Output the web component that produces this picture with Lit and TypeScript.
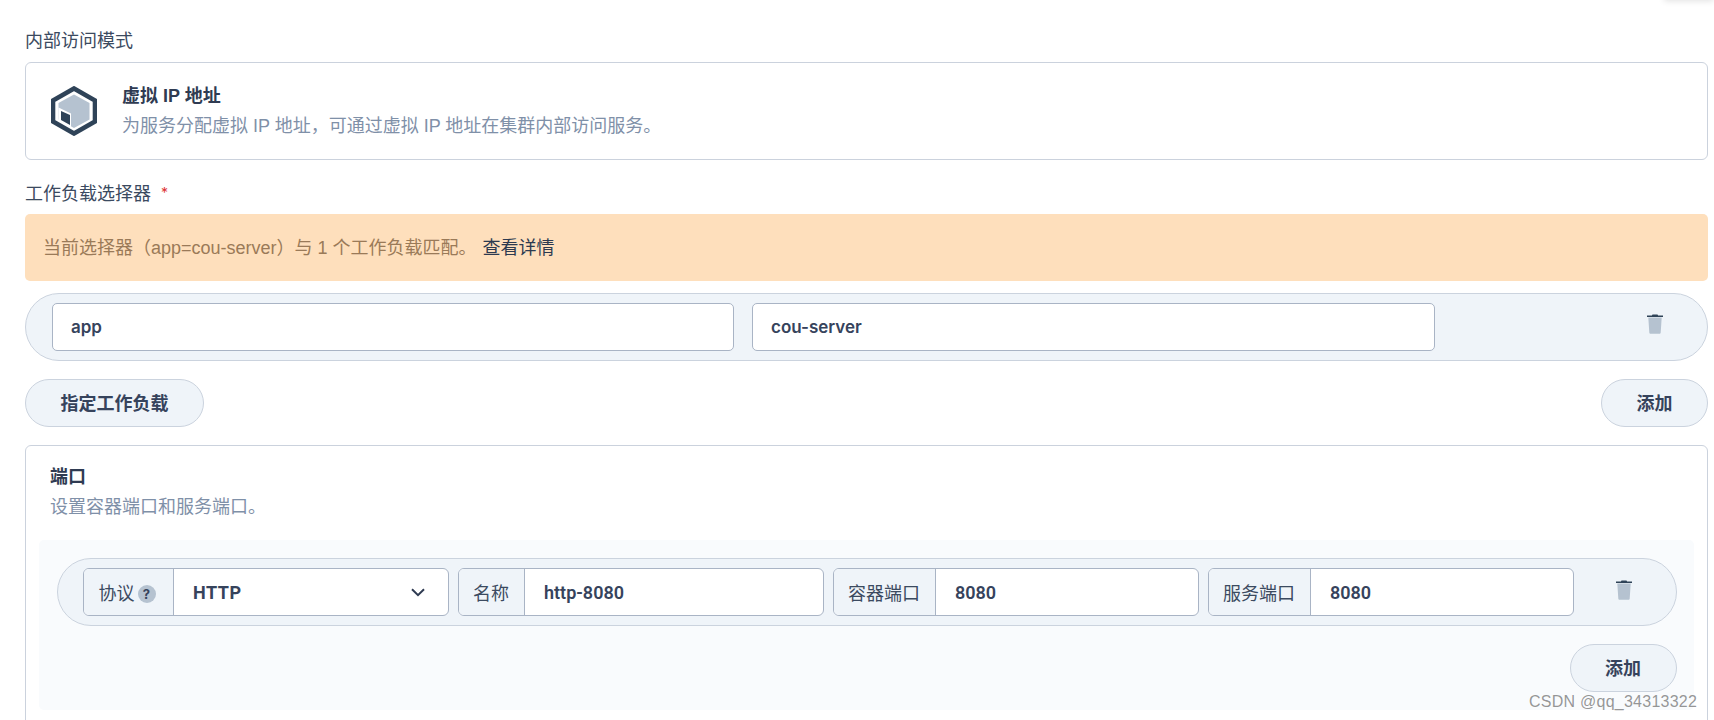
import { LitElement, html, css, svg } from "lit";
import { customElement } from "lit/decorators.js";

const trash = html`<svg class="trash" viewBox="0 0 16 20" width="16" height="20">
  <path d="M5.5 0.4h5l0.6 1H16v1.6H0V1.4h4.9z" fill="#2f4358"></path>
  <path d="M1.3 3.6h13.4l-1 14.8c0 .9-.6 1.4-1.4 1.4H3.7c-.8 0-1.4-.5-1.4-1.4z" fill="#b5c2d0"></path>
</svg>`;

const cube = svg`
  <polygon points="23,2.5 44,14.4 44,35.6 23,47.5 2,35.6 2,14.4" fill="#fff" stroke="#2f4358" stroke-width="4.6"></polygon>
  <polygon points="23,8.5 38.5,17 38.5,33.5 23,42 7.5,33.5 7.5,17" fill="#b5c2d0"></polygon>
  <polygon points="7.5,21.5 20,27.5 20,42 7.5,35" fill="#fff"></polygon>
  <polygon points="10,25 19,29 19,39 10,34" fill="#2f4358"></polygon>`;

@customElement("app-root")
export class AppRoot extends LitElement {
  static styles = css`
    :host {
      display: block;
      width: 1714px;
      height: 720px;
      overflow: hidden;
      box-sizing: border-box;
      padding: 29px 6px 0 25px;
      background: #fff;
      position: relative;
      font-family: Inter, "Noto Sans CJK SC", sans-serif;
      font-size: 18px;
      color: #36435c;
    }
    * { box-sizing: border-box; }
    .label { height: 24px; line-height: 24px; font-size: 18px; color: #3b4a60; margin-bottom: 9px; }
    .star { color: #d33; font-size: 14px; margin-left: 10px; vertical-align: 2px; }
    .mode {
      height: 98px; border: 1px solid #cbd2dd; border-radius: 6px;
      display: flex; align-items: center; padding-left: 25px; gap: 25px; margin-bottom: 21px;
    }
    .mode svg { width: 46px; height: 50px; flex: none; }
    .title { font-weight: 700; font-size: 18px; line-height: 24px; color: #2f3b52; font-family: "Liberation Sans", "Noto Sans CJK SC", sans-serif; }
    .desc { font-size: 18px; line-height: 24px; color: #7f90a8; font-family: "Liberation Sans", "Noto Sans CJK SC", sans-serif; }
    .mode .desc { margin-top: 6px; }
    .alert {
      height: 67px; border-radius: 5px; background: #fedfbc; color: #9a7a58;
      display: flex; align-items: center; padding: 0 0 4px 18px; font-size: 18px; margin-bottom: 12px;
      font-family: "Liberation Sans", "Noto Sans CJK SC", sans-serif;
    }
    .alert a { color: #2d3a50; margin-left: 6px; font-size: 18px; }
    .row {
      background: #eff4f9; border: 1px solid #cbd3de; display: grid; align-items: center;
    }
    .row.sel {
      height: 68px; border-radius: 34px; padding-left: 26px;
      grid-template-columns: 682px 683px 1fr; column-gap: 18px; margin-bottom: 18px;
    }
    .row.sel .trash { justify-self: end; margin: 0 44px 6px 0; }
    .input {
      height: 48px; background: #fff; border: 1px solid #a9b4c5; border-radius: 5px;
      display: flex; align-items: center; padding: 0 0 1px 18px; font-weight: 600; font-size: 17px; color: #36435c;
    }
    .btns { display: flex; justify-content: space-between; margin-bottom: 18px; }
    .btn {
      height: 48px; border: 1px solid #cbd3de; border-radius: 24px; background: #eff4f9;
      display: inline-flex; align-items: center; justify-content: center;
      font-weight: 700; font-size: 18px; color: #36435c; padding: 0 34.5px 3px;
    }
    .ports { border: 1px solid #cbd2dd; border-radius: 6px; padding: 19px 13px 18px 12.5px; }
    .ports > .title, .ports > .desc { margin-left: 11.5px; }
    .ports > .desc { margin-top: 6px; }
    .panel {
      margin-top: 21px; background: #f9fbfd; border-radius: 5px; padding: 18px 17.5px 18px 18px;
    }
    .row.port {
      height: 68px; border-radius: 34px; padding-left: 25px; margin-bottom: 18px;
      grid-template-columns: repeat(4, 366px) 1fr; column-gap: 9px;
    }
    .row.port .trash { justify-self: end; margin: 0 44px 4px 0; }
    .group {
      height: 48px; display: flex; background: #fff; border: 1px solid #a9b4c5; border-radius: 6px; overflow: hidden;
    }
    .addon {
      flex: none; background: #eff4f9; border-right: 1px solid #a9b4c5; padding: 0 14.5px;
      display: flex; align-items: center; gap: 3px; font-size: 18px; color: #3b4a60;
    }
    .addon.proto { width: 90px; padding-left: 15px; padding-right: 0; }
    .help {
      width: 18px; height: 18px; border-radius: 50%; background: #b5c2d0; color: #36435c;
      font-size: 13px; font-weight: 700; display: inline-flex; align-items: center; justify-content: center; flex: none; margin-top: 3px;
    }
    .val {
      flex: 1; display: flex; align-items: center; justify-content: space-between;
      padding: 0 23px 0 19.5px; font-family: Roboto, "Noto Sans CJK SC", sans-serif; font-weight: 600; font-size: 18px; color: #36435c;
    }
    .val.http { font-weight: 700; letter-spacing: 0.5px; }
    .add-line { display: flex; justify-content: flex-end; }
    .shadow {
      position: absolute; top: -12px; right: 0; width: 50px; height: 12px;
      box-shadow: 0 1px 6px rgba(0, 0, 0, 0.12);
    }
    .mark {
      position: absolute; left: 1529px; top: 692px; font-family: "Liberation Sans", sans-serif;
      font-size: 16px; line-height: 20px; letter-spacing: 0.25px; color: rgba(110, 110, 110, 0.72);
    }
  `;

  private group(label: string, value: string) {
    return html`<div class="group">
      <div class="addon">${label}</div>
      <div class="val">${value}</div>
    </div>`;
  }

  render() {
    return html`
      <div class="shadow"></div>
      <div class="label">内部访问模式</div>
      <div class="mode">
        <svg viewBox="0 0 46 50">${cube}</svg>
        <div>
          <div class="title">虚拟 IP 地址</div>
          <div class="desc">为服务分配虚拟 IP 地址&#xFF0C;可通过虚拟 IP 地址在集群内部访问服务。</div>
        </div>
      </div>
      <div class="label">工作负载选择器<span class="star">*</span></div>
      <div class="alert">当前选择器&#xFF08;app=cou-server&#xFF09;与 1 个工作负载匹配。<a>查看详情</a></div>
      <div class="row sel">
        <div class="input">app</div>
        <div class="input">cou-server</div>
        ${trash}
      </div>
      <div class="btns">
        <div class="btn">指定工作负载</div>
        <div class="btn">添加</div>
      </div>
      <div class="ports">
        <div class="title">端口</div>
        <div class="desc">设置容器端口和服务端口。</div>
        <div class="panel">
          <div class="row port">
            <div class="group">
              <div class="addon proto">协议<span class="help">?</span></div>
              <div class="val http">HTTP
                <svg width="14" height="9" viewBox="0 0 14 9"><path d="M1 1.2l6 6 6-6" fill="none" stroke="#2f3b52" stroke-width="2"></path></svg>
              </div>
            </div>
            ${this.group("名称", "http-8080")}
            ${this.group("容器端口", "8080")}
            ${this.group("服务端口", "8080")}
            ${trash}
          </div>
          <div class="add-line"><div class="btn">添加</div></div>
        </div>
      </div>
      <div class="mark">CSDN @qq_34313322</div>
    `;
  }
}
